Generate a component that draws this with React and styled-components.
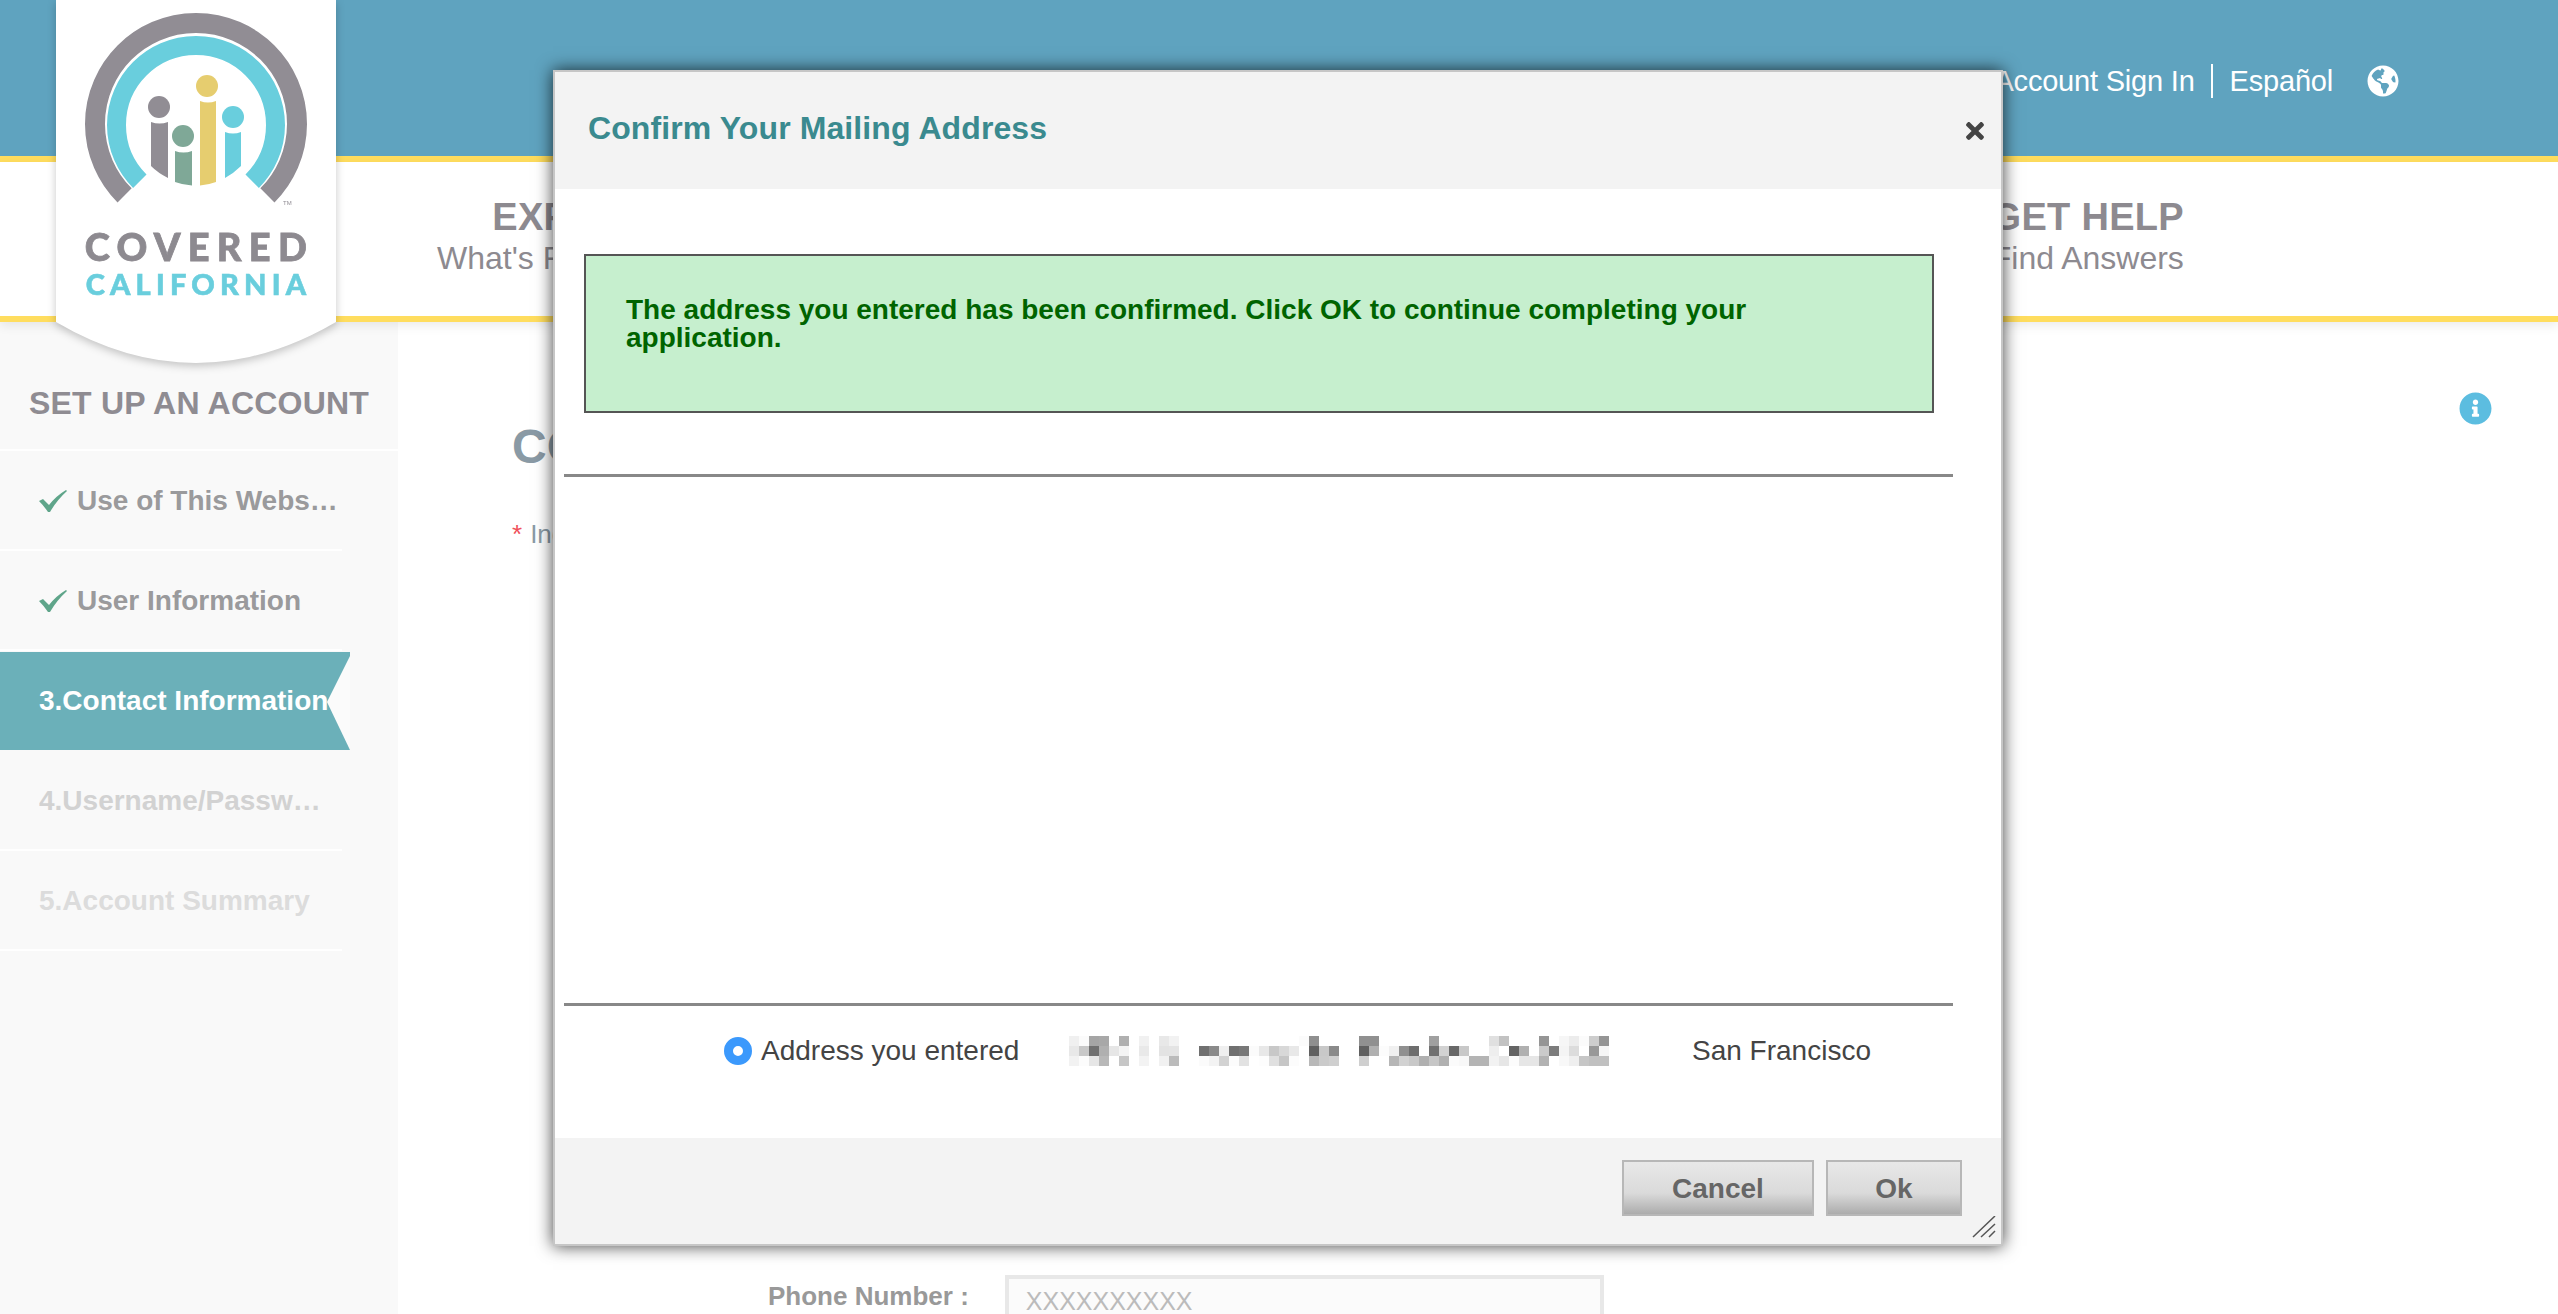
import React from "react";
import styled, { createGlobalStyle } from "styled-components";
import { FaGlobeAmericas, FaInfoCircle, FaTimes } from "react-icons/fa";

const Global = createGlobalStyle`
  html, body { margin: 0; padding: 0; background: #fff; }
  body { font-family: "Liberation Sans", Arial, sans-serif; }
  * { box-sizing: border-box; }
`;

const Page = styled.div`
  position: relative;
  width: 2558px;
  height: 1314px;
  overflow: hidden;
  background: #fff;
`;

const Header = styled.header`
  height: 162px;
  padding: 6px 159px 0 0;
  background: #5fa3bf;
  border-bottom: 6px solid #ffdd5e;
  display: flex;
  justify-content: flex-end;
  align-items: center;
  color: #fff;
  font-size: 29px;
  letter-spacing: -0.2px;
`;

const TopLink = styled.span`
  white-space: nowrap;
`;

const TopDivider = styled.span`
  width: 2px;
  height: 34px;
  margin: 0 17px 0 16px;
  background: #fff;
`;

const GlobeWrap = styled.span`
  display: flex;
  margin-left: 34px;
  font-size: 32px;
  color: #fff;
`;

const Nav = styled.nav`
  height: 160px;
  border-bottom: 6px solid #ffdd5e;
  padding: 33px 374px 0 437px;
  display: flex;
  justify-content: space-between;
  align-items: flex-start;
  background: #fff;
  box-shadow: 0 4px 10px rgba(0, 0, 0, 0.08);
  position: relative;
`;

const NavItem = styled.div`
  text-align: center;
  color: #8d8a90;
`;

const NavTitle = styled.div`
  font-size: 38px;
  line-height: 44px;
  font-weight: 700;
  letter-spacing: 0.3px;
`;

const NavSub = styled.div`
  font-size: 32px;
  line-height: 38px;
`;

const LogoShadow = styled.div`
  position: absolute;
  left: 56px;
  top: 0;
  width: 280px;
  height: 364px;
  filter: drop-shadow(0 3px 4px rgba(0, 0, 0, 0.22));
`;

const LogoCard = styled.div`
  height: 100%;
  background: #fff;
  clip-path: path("M0 0 H280 V322 Q140 404 0 322 Z");
  display: flex;
  flex-direction: column;
  align-items: center;
`;

const LogoMark = styled.svg`
  display: block;
  width: 280px;
  height: 226px;
  flex: none;
`;

const LogoWordTop = styled.div`
  font-family: "Lato", "Liberation Sans", sans-serif;
  font-weight: 900;
  font-size: 38px;
  line-height: 40px;
  letter-spacing: 7.3px;
  margin-right: -7px;
  color: #8d8a90;
  white-space: nowrap;
  -webkit-text-stroke: 0.8px #8d8a90;
`;

const LogoWordBottom = styled.div`
  font-family: "Lato", "Liberation Sans", sans-serif;
  font-weight: 900;
  font-size: 29px;
  line-height: 30px;
  letter-spacing: 5.2px;
  margin-right: -5px;
  margin-top: 3px;
  color: #69cedd;
  white-space: nowrap;
  -webkit-text-stroke: 0.6px #69cedd;
`;

const Main = styled.main`
  display: flex;
  height: 992px;
`;

const Sidebar = styled.aside`
  width: 398px;
  flex: none;
  background: #f9f9f9;
`;

const SideHeading = styled.div`
  height: 129px;
  padding: 60px 0 0 29px;
  font-size: 32px;
  line-height: 42px;
  font-weight: 700;
  letter-spacing: 0.2px;
  color: #8f8c92;
  white-space: nowrap;
  border-bottom: 2px solid #fff;
`;

const Step = styled.div`
  position: relative;
  width: ${(p) => (p.$active ? "350px" : "342px")};
  height: ${(p) => (p.$active ? "98px" : "100px")};
  margin: ${(p) => (p.$active ? "1px 0" : "0")};
  padding: ${(p) => (p.$active ? "0" : "2px")} ${(p) => p.$pr || 0}px 0 39px;
  display: flex;
  align-items: center;
  gap: 10px;
  font-size: 28px;
  font-weight: 700;
  background: ${(p) => (p.$active ? "#6bb0b9" : "transparent")};
  color: ${(p) =>
    p.$active ? "#fff" : p.$done ? "#9a9a9c" : p.$tone || "#d2d2d2"};
  border-bottom: ${(p) => (p.$active ? "0" : "2px solid #fff")};
  &::after {
    content: ${(p) => (p.$active ? '""' : "none")};
    position: absolute;
    right: 0;
    top: 0;
    width: 23px;
    height: 100%;
    background: #fbfbfb;
    clip-path: polygon(100% 4%, 0 51%, 100% 100%);
  }
`;

const StepLabel = styled.span`
  white-space: nowrap;
  overflow: hidden;
  text-overflow: ellipsis;
  min-width: 0;
  flex: ${(p) => (p.$bare ? "none" : "1")};
`;

const Check = styled.svg`
  width: 28px;
  height: 22px;
  flex: none;
`;

const Content = styled.section`
  position: relative;
  flex: 1;
  padding: 70px 66px 0 114px;
`;

const TitleRow = styled.div`
  display: flex;
  justify-content: space-between;
  align-items: flex-start;
`;

const PageTitle = styled.h1`
  margin: 30px 0 0;
  font-size: 48px;
  line-height: 50px;
  font-weight: 700;
  color: #8a9aa5;
`;

const InfoIcon = styled.span`
  display: flex;
  font-size: 33px;
  color: #5cbde0;
`;

const Note = styled.p`
  margin: 47px 0 0;
  font-size: 26px;
  line-height: 30px;
  color: #8a9aa5;
`;

const Req = styled.span`
  color: #f0505a;
  margin-right: 8px;
`;

const FieldRow = styled.div`
  display: flex;
  align-items: flex-start;
  gap: 36px;
  margin: 726px 0 0 256px;
`;

const FieldLabel = styled.label`
  font-size: 26px;
  line-height: 36px;
  font-weight: 700;
  color: #999;
  white-space: nowrap;
  margin-top: 3px;
`;

const FakeInput = styled.div`
  width: 599px;
  height: 70px;
  border: 4px solid #e8e8e8;
  background: #fbfbfb;
  padding: 7px 0 0 17px;
  font-size: 25px;
  line-height: 30px;
  color: #bbb;
`;

const Modal = styled.div`
  position: absolute;
  left: 553px;
  top: 70px;
  width: 1450px;
  height: 1176px;
  display: flex;
  flex-direction: column;
  background: #fff;
  border: 2px solid #c6c6c6;
  box-shadow: 0 0 16px rgba(0, 0, 0, 0.75);
`;

const ModalHeader = styled.div`
  height: 117px;
  flex: none;
  padding: 0 13px 0 33px;
  background: #f3f3f3;
  display: flex;
  align-items: center;
  justify-content: space-between;
`;

const ModalTitle = styled.h2`
  margin: -5px 0 0;
  font-size: 32px;
  line-height: 38px;
  font-weight: 700;
  letter-spacing: 0.1px;
  color: #3a8a8f;
`;

const Close = styled.span`
  display: flex;
  font-size: 26px;
  color: #444;
`;

const ModalBody = styled.div`
  flex: 1;
  display: flex;
  flex-direction: column;
  min-height: 0;
`;

const Alert = styled.div`
  width: 1350px;
  height: 159px;
  margin: 65px 0 0 29px;
  padding: 40px 60px 0 40px;
  flex: none;
  background: #c6efce;
  border: 2px solid #555;
  color: #006400;
  font-size: 28px;
  line-height: 28px;
  font-weight: 700;
`;

const Rule = styled.hr`
  flex: none;
  height: 3px;
  border: 0;
  background: #888;
  margin: ${(p) => p.$top}px 48px 0 9px;
`;

const AddressRow = styled.div`
  flex: 1;
  display: flex;
  align-items: center;
  padding: 0 0 42px 169px;
  font-size: 28px;
  color: #444;
`;

const Radio = styled.span`
  width: 28px;
  height: 28px;
  flex: none;
  border-radius: 50%;
  border: 9px solid #3b99fc;
  background: #fff;
  margin-right: 9px;
`;

const AddressLabel = styled.span`
  width: 308px;
  flex: none;
  white-space: nowrap;
`;

const Pixelated = styled.svg`
  display: block;
  width: 540px;
  height: 30px;
  flex: none;
  margin-right: 83px;
`;

const ModalFooter = styled.div`
  position: relative;
  height: 106px;
  flex: none;
  padding: 22px 39px 0 0;
  background: #f3f3f3;
  display: flex;
  justify-content: flex-end;
  align-items: flex-start;
  gap: 12px;
`;

const Button = styled.button`
  width: ${(p) => p.$w}px;
  height: 56px;
  padding: 2px 0 0;
  border: 2px solid #b7b7b7;
  background: linear-gradient(#e8e8e8, #dadada 60%, #acacac);
  color: #666;
  font: 700 28px "Liberation Sans", Arial, sans-serif;
`;

const Grip = styled.svg`
  position: absolute;
  right: 5px;
  bottom: 6px;
  width: 24px;
  height: 22px;
`;

const BLUR = [
  "f0 fb a5 a8 ff b0 ff f1 ff e8 f2 ff ff ff ff ff ff ff ff ff ff ff ff fb 8f ff ff ff ff 90 90 ff ff ff ff ff a0 ff ff ff ff ff e0 c2 ff ff ff 95 ff f6 ec fb cd 95",
  "e8 c8 70 b0 e6 f4 ff e9 ff e3 e4 ff ff 70 8a ef 70 78 fb e8 c8 d8 e8 ff 60 c8 8a ff ff 60 b0 fc f0 90 6e ff 70 d2 68 c8 ff ff ee ff 64 b0 ff ca 7c f4 dc ff 98 f6",
  "f2 fc e6 b8 ff c6 ff f3 ff f1 bb ff ff fb f3 d2 fc e2 ff fd e0 c6 fc ff b8 ca cf ff ff cf ff ff b6 d2 c8 b0 c6 b0 fb f8 b4 b4 f2 e6 fc e6 e6 b2 ff f8 ef c6 c0 c0",
].map((r) => r.split(" "));

function Logo() {
  return (
    <LogoMark viewBox="56 0 280 226">
      <path
        d="M124.6 195.4 A101 101 0 1 1 267.4 195.4"
        fill="none"
        stroke="#918d94"
        strokeWidth="20"
      />
      <path
        d="M139.8 181.2 A79.5 79.5 0 1 1 252.2 181.2"
        fill="none"
        stroke="#69cedd"
        strokeWidth="19"
      />
      <circle cx="159" cy="107" r="11" fill="#918d94" />
      <path d="M151 122 Q159.500 125 168 122 V178 Q158 173 151 166 Z" fill="#918d94" />
      <circle cx="183" cy="136" r="11" fill="#7fa897" />
      <path d="M175 151 Q183.500 154 192 151 V185.500 Q183 185 175 182 Z" fill="#7fa897" />
      <circle cx="207" cy="86" r="11" fill="#e6cd6f" />
      <path d="M200 101 Q208 104 216 101 V182 Q208 185 200 185.500 Z" fill="#e6cd6f" />
      <circle cx="233" cy="117" r="11" fill="#69cedd" />
      <path d="M225 132 Q233 135 241 132 V166 Q234 173 225 178 Z" fill="#69cedd" />
      <text x="283" y="205" fontSize="6" fontFamily="Liberation Sans" fill="#918d94">
        TM
      </text>
    </LogoMark>
  );
}

const steps = [
  { label: "Use of This Website", done: true },
  { label: "User Information", done: true },
  { label: "3.Contact Information", active: true },
  { label: "4.Username/Password", tone: "#d2d2d2", pr: 16 },
  { label: "5.Account Summary", tone: "#dcdcdc" },
];

export default function App() {
  return (
    <Page>
      <Global />
      <Header>
        <TopLink>Account Sign In</TopLink>
        <TopDivider />
        <TopLink>Español</TopLink>
        <GlobeWrap>
          <FaGlobeAmericas />
        </GlobeWrap>
      </Header>
      <Nav>
        <NavItem>
          <NavTitle>EXPLORE</NavTitle>
          <NavSub>What's For You Here</NavSub>
        </NavItem>
        <NavItem>
          <NavTitle>GET HELP</NavTitle>
          <NavSub>Find Answers</NavSub>
        </NavItem>
      </Nav>
      <Main>
        <Sidebar>
          <SideHeading>SET UP AN ACCOUNT</SideHeading>
          {steps.map((s) => (
            <Step key={s.label} $active={s.active} $done={s.done} $tone={s.tone} $pr={s.pr}>
              {s.done && (
                <Check viewBox="0 0 28 22">
                  <path d="M0 11 L4 9 L10 15 Q17 6 27 0 L28 1 Q18 10 11 22 L9 22 Q5 16 0 11 Z" fill="#5fa58a" />
                </Check>
              )}
              <StepLabel $bare={s.active}>{s.label}</StepLabel>
            </Step>
          ))}
        </Sidebar>
        <Content>
          <TitleRow>
            <PageTitle>CONTACT INFORMATION</PageTitle>
            <InfoIcon>
              <FaInfoCircle />
            </InfoIcon>
          </TitleRow>
          <Note>
            <Req>*</Req>Indicates required field
          </Note>
          <FieldRow>
            <FieldLabel>Phone Number :</FieldLabel>
            <FakeInput>XXXXXXXXXX</FakeInput>
          </FieldRow>
        </Content>
      </Main>
      <LogoShadow>
        <LogoCard>
          <Logo />
          <LogoWordTop>COVERED</LogoWordTop>
          <LogoWordBottom>CALIFORNIA</LogoWordBottom>
        </LogoCard>
      </LogoShadow>
      <Modal>
        <ModalHeader>
          <ModalTitle>Confirm Your Mailing Address</ModalTitle>
          <Close>
            <FaTimes />
          </Close>
        </ModalHeader>
        <ModalBody>
          <Alert>
            The address you entered has been confirmed. Click OK to continue completing your application.
          </Alert>
          <Rule $top={61} />
          <Rule $top={526} />
          <AddressRow>
            <Radio />
            <AddressLabel>Address you entered</AddressLabel>
            <Pixelated viewBox="0 0 540 30" shapeRendering="crispEdges">
              {BLUR.map((row, y) =>
                row.map((v, x) =>
                  v === "ff" ? null : (
                    <rect key={`${x}-${y}`} x={x * 10} y={y * 10} width="10" height="10" fill={`#${v}${v}${v}`} />
                  )
                )
              )}
            </Pixelated>
            <span>San Francisco</span>
          </AddressRow>
        </ModalBody>
        <ModalFooter>
          <Button $w={192}>Cancel</Button>
          <Button $w={136}>Ok</Button>
          <Grip viewBox="0 0 24 22">
            <path d="M1 21 L23 0 M9 21 L23 8 M17 21 L23 15" stroke="#555" strokeWidth="1.500" fill="none" />
          </Grip>
        </ModalFooter>
      </Modal>
    </Page>
  );
}
